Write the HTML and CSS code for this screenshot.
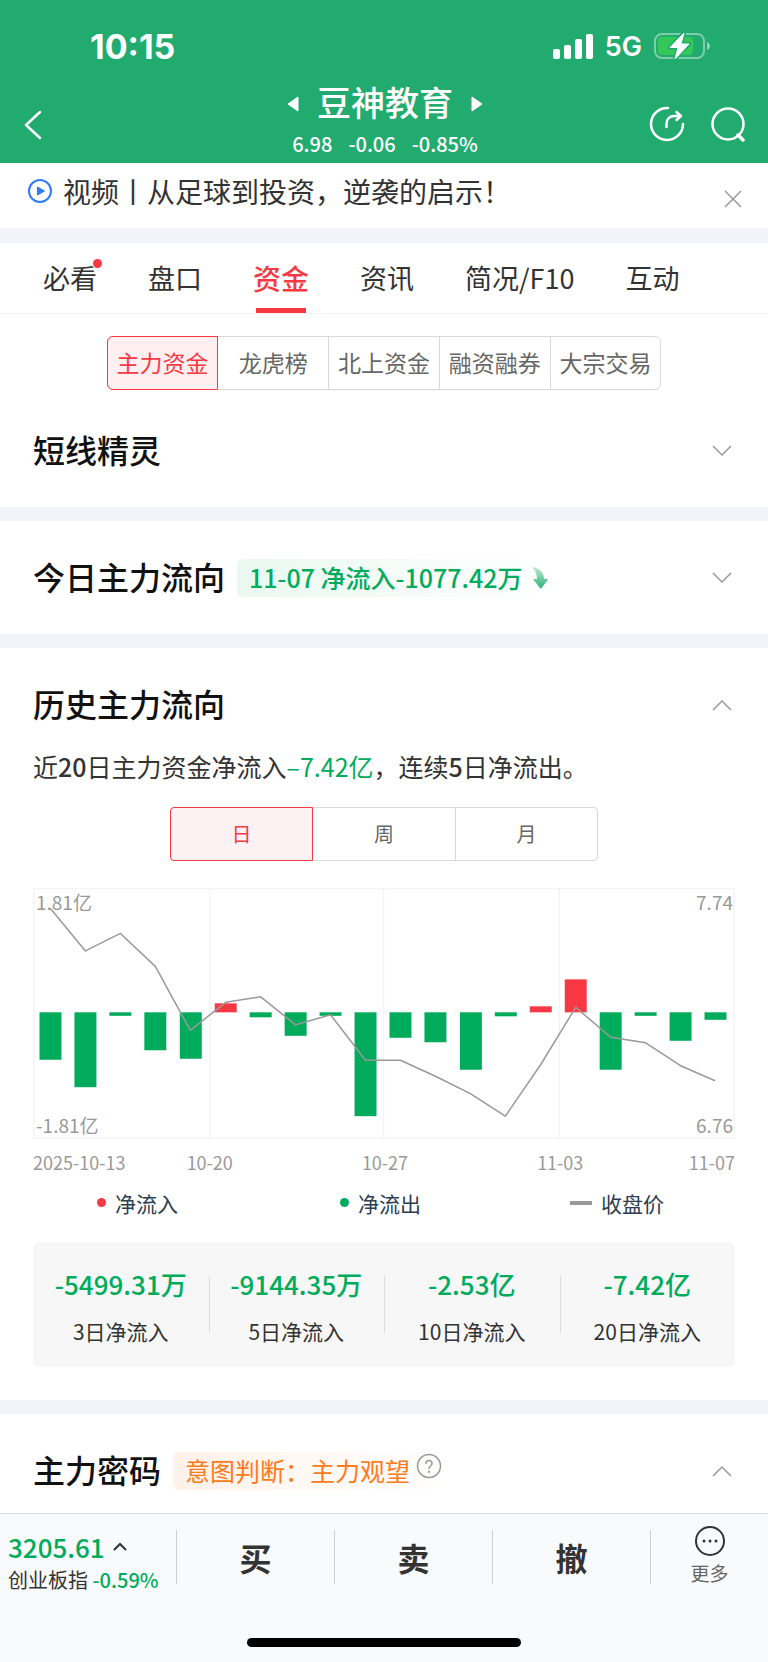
FILE: index.html
```html
<!DOCTYPE html>
<html lang="zh-CN">
    <head>
        <meta charset="utf-8">
        <meta name="viewport" content="width=device-width, initial-scale=1">
        <title>豆神教育</title>
        <link rel="stylesheet" href="styles.css">
    </head>
    <body>
        <header class="top">
            <div class="status">
                <span class="clock">10:15</span>
                <div class="status-right">
                    <svg width="40" height="26" viewBox="0 0 40 26" fill="#fff">
                        <rect x="0" y="16" width="7" height="10" rx="2" />
                        <rect x="11" y="12" width="7" height="14" rx="2" />
                        <rect x="22" y="6" width="7" height="20" rx="2" />
                        <rect x="33" y="1" width="7" height="25" rx="2" />
                    </svg>
                    <span class="net">5G</span>
                    <svg width="56" height="28" viewBox="0 0 56 28">
                        <rect x="1" y="2" width="49" height="24" rx="7" fill="none" stroke="#fff" stroke-opacity=".42" stroke-width="2" />
                        <path d="M53 10c4 1.500 4 6.500 0 8z" fill="#fff" fill-opacity=".5" />
                        <rect x="4" y="5" width="35" height="18" rx="4" fill="#34c759" />
                        <path d="M30 1L16 15.500h8L21 27l14-15h-8z" fill="#fff" stroke="#22ab6f" stroke-width="4" stroke-linejoin="round" />
                        <path d="M30 1L16 15.500h8L21 27l14-15h-8z" fill="#fff" stroke="#fff" stroke-linejoin="round" />
                    </svg>
                </div>
            </div>
            <div class="titlebar">
                <button class="icon-btn back" aria-label="返回">
                    <svg width="18" height="30" viewBox="0 0 18 30"><path d="M16 2L2 15l14 13" fill="none" stroke="#fff" stroke-width="2.500" stroke-linecap="round" stroke-linejoin="round" /></svg>
                </button>
                <div class="stock">
                    <div class="stock-name">
                        <button class="icon-btn" aria-label="上一只"><svg width="12" height="16" viewBox="0 0 12 16"><path d="M11 1v14L1 8z" fill="#fff" stroke="#fff" stroke-linejoin="round" /></svg></button>
                        <h1>豆神教育</h1>
                        <button class="icon-btn" aria-label="下一只"><svg width="12" height="16" viewBox="0 0 12 16"><path d="M1 1v14l10-7z" fill="#fff" stroke="#fff" stroke-linejoin="round" /></svg></button>
                    </div>
                    <div class="quote"><span>6.98</span><span>-0.06</span><span>-0.85%</span></div>
                </div>
                <div class="actions">
                    <button class="icon-btn" aria-label="分享">
                        <svg width="36" height="36" viewBox="0 0 36 36" fill="none" stroke="#fff" stroke-width="2.500" stroke-linecap="round" stroke-linejoin="round">
                            <path d="M19 2a16 16 0 1 0 15 16" />
                            <path d="M17.500 21v-3c0-5 3-8 8-8h6M27.500 6l4.500 4-4.500 4" />
                        </svg>
                    </button>
                    <button class="icon-btn" aria-label="搜索">
                        <svg width="36" height="36" viewBox="0 0 36 36" fill="none" stroke="#fff" stroke-width="2.500" stroke-linecap="round">
                            <circle cx="18" cy="18" r="15.500" />
                            <path d="M28 29l5 5" stroke-width="3.500" />
                        </svg>
                    </button>
                </div>
            </div>
        </header>

        <div class="notice">
            <svg width="26" height="26" viewBox="0 0 26 26"><circle cx="13" cy="13" r="11" fill="none" stroke="#2f7bf6" stroke-width="2" /><path d="M10.500 9v8l7-4z" fill="#2f7bf6" stroke="#2f7bf6" stroke-linejoin="round" /></svg>
            <a href="#">视频丨从足球到投资，逆袭的启示！</a>
            <button class="icon-btn close" aria-label="关闭"><svg width="18" height="18" viewBox="0 0 18 18"><path d="M1 1l16 16M17 1L1 17" stroke="#999" stroke-width="1.500" /></svg></button>
        </div>

        <nav class="tabs">
            <a href="#" class="dot">必看</a>
            <a href="#">盘口</a>
            <a href="#" class="active">资金</a>
            <a href="#">资讯</a>
            <a href="#">简况/F10</a>
            <a href="#">互动</a>
        </nav>

        <main>
            <section class="first">
                <div class="segment wide">
                    <button class="on">主力资金</button>
                    <button>龙虎榜</button>
                    <button>北上资金</button>
                    <button>融资融券</button>
                    <button>大宗交易</button>
                </div>
                <div class="section-head">
                    <h2>短线精灵</h2>
                    <button class="icon-btn toggle" aria-label="展开"><svg width="20" height="12" viewBox="0 0 20 12"><path d="M1 1l9 9 9-9" /></svg></button>
                </div>
            </section>

            <section>
                <div class="section-head">
                    <h2>今日主力流向</h2>
                    <div class="tag green">
                        <span>11-07 净流入-1077.42万</span>
                        <svg width="16" height="22" viewBox="0 0 16 22">
                            <defs><linearGradient id="fall" x1="0" y1="0" x2="0" y2="1"><stop offset="0" stop-color="#bfe8d3" /><stop offset="1" stop-color="#2fb477" /></linearGradient></defs>
                            <path d="M0 0c8 1 12 6 12 12h3c1 0 1 1 .5 1.500L9.500 21c-.5.700-1 .7-1.500 0l-6-7.500c-.5-.5-.5-1.500.5-1.500H5C5 7 3 3 0 0z" fill="url(#fall)" />
                        </svg>
                    </div>
                    <button class="icon-btn toggle" aria-label="展开"><svg width="20" height="12" viewBox="0 0 20 12"><path d="M1 1l9 9 9-9" /></svg></button>
                </div>
            </section>

            <section class="history">
                <div class="section-head">
                    <h2>历史主力流向</h2>
                    <button class="icon-btn toggle" aria-label="收起"><svg width="20" height="12" viewBox="0 0 20 12"><path d="M1 11l9-9 9 9" /></svg></button>
                </div>
                <p class="summary">近<b>20</b>日主力资金净流入<span class="down">–7.42亿</span>，连续<b>5</b>日净流出。</p>
                <div class="segment period">
                    <button class="on">日</button>
                    <button>周</button>
                    <button>月</button>
                </div>
                <div class="chart">
                    <svg viewBox="0 0 703 251">
                        <g fill="none" stroke="#f4f4f4" stroke-width="1.500">
                            <rect x="0.750" y="0.750" width="701.500" height="249.500" />
                            <path d="M177 0v251M351 0v251M527 0v251" />
                            <path d="M0 124.500h703" stroke-dasharray="4 3" stroke-width="1" />
                        </g>
                        <g fill="#00ac5c">
                            <rect x="6.500" y="124.500" width="22" height="47.500" />
                            <rect x="41.500" y="124.500" width="22" height="75" />
                            <rect x="76.500" y="124.500" width="22" height="3.500" />
                            <rect x="111.500" y="124.500" width="22" height="38" />
                            <rect x="147" y="124.500" width="22" height="46.500" />
                            <rect x="217" y="124.500" width="22" height="5" />
                            <rect x="252" y="124.500" width="22" height="23.500" />
                            <rect x="287" y="124.500" width="22" height="3.500" />
                            <rect x="322" y="124.500" width="22" height="104" />
                            <rect x="357" y="124.500" width="22" height="25.500" />
                            <rect x="392" y="124.500" width="22" height="30" />
                            <rect x="427.500" y="124.500" width="22" height="57.500" />
                            <rect x="462.500" y="124.500" width="22" height="4" />
                            <rect x="567.500" y="124.500" width="22" height="57.500" />
                            <rect x="602.500" y="124.500" width="22" height="3.500" />
                            <rect x="637.500" y="124.500" width="22" height="28.500" />
                            <rect x="672.500" y="124.500" width="22" height="7.500" />
                        </g>
                        <g fill="#f83843">
                            <rect x="182" y="115.500" width="22" height="9" />
                            <rect x="497.500" y="118.500" width="22" height="6" />
                            <rect x="532.500" y="91.500" width="22" height="33" />
                        </g>
                        <polyline points="17.500,20.500 52.500,63 87.500,45.500 122.500,78.500 157.500,142.500 193,114.500 228,109 263,137 298,127 333,172.500 368,172.500 403,188.500 438,206 473,228.500 508,177.500 543.500,119.500 578.500,149.500 613.500,155 648.500,178 683,193" fill="none" stroke="#999" stroke-width="1.500" stroke-linejoin="round" />
                    </svg>
                    <span class="axis tl">1.81亿</span>
                    <span class="axis bl">-1.81亿</span>
                    <span class="axis tr">7.74</span>
                    <span class="axis br">6.76</span>
                </div>
                <div class="dates">
                    <span>2025-10-13</span><span>10-20</span><span>10-27</span><span>11-03</span><span>11-07</span>
                </div>
                <div class="legend">
                    <div><i><em class="in"></em></i>净流入</div>
                    <div><i><em class="out"></em></i>净流出</div>
                    <div><i><em class="line"></em></i>收盘价</div>
                </div>
                <div class="stats">
                    <div><strong>-5499.31万</strong><span>3日净流入</span></div>
                    <div><strong>-9144.35万</strong><span>5日净流入</span></div>
                    <div><strong>-2.53亿</strong><span>10日净流入</span></div>
                    <div><strong>-7.42亿</strong><span>20日净流入</span></div>
                </div>
            </section>

            <section class="cipher">
                <div class="section-head">
                    <h2>主力密码</h2>
                    <div class="tag orange">
                        <span>意图判断：主力观望</span>
                        <button class="icon-btn help" aria-label="说明">
                            <svg width="26" height="26" viewBox="0 0 26 26" fill="none" stroke="#999" stroke-width="1.500" stroke-linecap="round">
                                <circle cx="13" cy="13" r="11.500" />
                                <path d="M10 10.500c0-4 6-4 6 0 0 2.500-3 2.500-3 5" /><path d="M13 18.500v.5" stroke-width="2" />
                            </svg>
                        </button>
                    </div>
                    <button class="icon-btn toggle" aria-label="收起"><svg width="20" height="12" viewBox="0 0 20 12"><path d="M1 11l9-9 9 9" /></svg></button>
                </div>
            </section>
        </main>

        <footer class="bottom">
            <div class="trade">
                <a href="#" class="index">
                    <span class="index-value">3205.61 <svg width="14" height="9" viewBox="0 0 14 9"><path d="M1 8l6-6 6 6" fill="none" stroke="#333" stroke-width="2" /></svg></span>
                    <span class="index-name">创业板指 <span class="down">-0.59%</span></span>
                </a>
                <button>买</button>
                <button>卖</button>
                <button>撤</button>
                <button class="more">
                    <svg width="32" height="32" viewBox="0 0 32 32"><circle cx="16" cy="16" r="14" fill="none" stroke="#333" stroke-width="2" /><g fill="#333"><circle cx="10" cy="16" r="1.500" /><circle cx="16" cy="16" r="1.500" /><circle cx="22" cy="16" r="1.500" /></g></svg>
                    <span>更多</span>
                </button>
            </div>
            <div class="home"></div>
        </footer>
    </body>
</html>
```
FILE: styles.css
```css
* {
    box-sizing: border-box;
}
body {
    margin: 0;
    min-height: 100vh;
    display: flex;
    flex-direction: column;
    background: #fff;
    color: #333;
    font-family: "Noto Sans CJK SC", sans-serif;
}
h1, h2, p {
    margin: 0;
}
a {
    color: inherit;
    text-decoration: none;
}
button {
    font: inherit;
    color: inherit;
    background: none;
    border: 0;
    padding: 0;
    cursor: pointer;
}
svg {
    display: block;
    flex: none;
}
.icon-btn {
    display: block;
    flex: none;
}
.down {
    color: #00ac5c;
}

/* header */
.top {
    background: #22ab6f;
    color: #fff;
    height: 163px;
}
.status {
    display: flex;
    justify-content: space-between;
    align-items: center;
    height: 80px;
    padding: 12px 58px 0 90px;
    font-family: Inter, sans-serif;
}
.clock {
    font-size: 34px;
    font-weight: 700;
}
.status-right {
    display: flex;
    align-items: center;
    gap: 12px;
}
.net {
    font-size: 27px;
    font-weight: 600;
}
.titlebar {
    display: grid;
    grid-template-columns: 1fr auto 1fr;
    height: 83px;
    padding: 0 22px 0 24px;
}
.back {
    align-self: center;
    justify-self: start;
    padding-top: 6px;
}
.stock-name {
    display: flex;
    align-items: center;
    justify-content: center;
    gap: 18px;
}
.stock-name h1 {
    font-size: 34px;
    line-height: 44px;
    padding-bottom: 4px;
    font-weight: 500;
}
.quote {
    display: flex;
    justify-content: center;
    gap: 16px;
    font-size: 20px;
    line-height: 32px;
    font-weight: 500;
}
.actions {
    align-self: center;
    justify-self: end;
    display: flex;
    gap: 25px;
    padding-top: 5px;
}

/* notice */
.notice {
    display: flex;
    align-items: center;
    height: 80px;
    padding: 0 27px 10px;
    border-bottom: 15px solid #f3f4f9;
    font-size: 28px;
    line-height: 40px;
}
.notice a {
    flex: 1;
    margin-left: 10px;
}
.close {
    padding-top: 16px;
    margin-right: -1px;
}

/* tabs */
.tabs {
    display: flex;
    gap: 51px;
    height: 71px;
    padding: 0 43px;
    border-bottom: 1px solid #f2f2f2;
    font-size: 27px;
    line-height: 70px;
    white-space: nowrap;
}
.tabs a {
    position: relative;
}
.tabs .active {
    color: #f83843;
    font-size: 28px;
    font-weight: 500;
}
.tabs .active::after {
    content: "";
    position: absolute;
    left: 3px;
    right: 3px;
    bottom: 0;
    height: 5px;
    background: #f83843;
}
.tabs .dot::after {
    content: "";
    position: absolute;
    top: 16px;
    right: -5px;
    width: 9px;
    height: 9px;
    border-radius: 50%;
    background: #f83843;
}

/* sections */
section {
    padding: 0 33px;
    border-bottom: 14px solid #f3f4f9;
}
.section-head {
    display: flex;
    align-items: center;
    height: 113px;
}
.section-head h2 {
    font-size: 32px;
    line-height: 46px;
    padding-bottom: 4px;
    font-weight: 500;
    color: #111;
}
.toggle {
    margin-left: auto;
    margin-right: 3px;
}
.toggle path {
    fill: none;
    stroke: #999;
    stroke-width: 1.5;
}
.segment {
    display: flex;
    margin: 0 auto;
    height: 54px;
    border: 1px solid #d8d8d8;
    border-radius: 6px;
    color: #666;
}
.segment button {
    flex: 1;
    margin: -1px 0;
    padding-bottom: 2px;
    border-right: 1px solid #d8d8d8;
}
.segment button:last-child {
    border-right: 0;
}
.segment .on {
    margin-left: -1px;
    color: #f83843;
    background: #ffeff0;
    border: 1px solid #f83843;
    border-radius: 6px 0 0 6px;
}
.wide {
    width: 79%;
    font-size: 23px;
}
.period {
    width: 61%;
    border-radius: 4px;
    font-size: 20px;
}
.period .on {
    border-radius: 4px 0 0 4px;
    background: #fdf2f3;
}
.first {
    padding-top: 22px;
}
.first .section-head {
    height: 117px;
    padding-top: 4px;
}
.tag {
    display: flex;
    align-items: center;
    height: 38px;
    margin-left: 12px;
    padding: 0 12px;
    border-radius: 6px;
    font-size: 25px;
    white-space: nowrap;
}
.tag span {
    padding-bottom: 2px;
}
.green {
    color: #00ac5c;
    font-weight: 500;
    gap: 10px;
    background: linear-gradient(90deg, #eaf8f1, #fff);
}
.orange {
    color: #ff7a20;
    gap: 6px;
    background: linear-gradient(90deg, #fff2ea, #fff);
}
.help {
    margin-bottom: 10px;
}

/* history chart */
.history {
    padding-bottom: 33px;
}
.history .section-head {
    height: 101px;
    padding-top: 12px;
}
.summary {
    font-size: 25px;
    line-height: 34px;
    margin-bottom: 24px;
}
.summary b {
    font-weight: 500;
}
.chart {
    position: relative;
    margin-top: 27px;
}
.chart svg {
    width: 100%;
}
.axis {
    position: absolute;
    color: #999;
    font-size: 19px;
    line-height: 28px;
}
.tl { left: 3px; top: 0; }
.bl { left: 3px; bottom: 0; }
.tr { right: 2px; top: 0; }
.br { right: 2px; bottom: 0; }
.dates {
    display: grid;
    grid-template-columns: 110fr 134fr 217fr 134fr 108fr;
    margin-top: 9px;
    color: #999;
    font-size: 18px;
    line-height: 28px;
    text-align: center;
}
.dates span:first-child {
    text-align: left;
}
.dates span:last-child {
    text-align: right;
}
.legend {
    display: flex;
    justify-content: space-between;
    margin-top: 11px;
    padding: 0 71px 0 51px;
    color: #2c3e50;
    font-size: 21px;
    line-height: 32px;
}
.legend div {
    display: flex;
    align-items: center;
    gap: 9px;
}
.legend i {
    width: 22px;
}
.legend em {
    display: block;
    margin-left: auto;
    width: 9px;
    height: 9px;
    border-radius: 50%;
}
.legend .in { background: #f83843; }
.legend .out { background: #00ac5c; }
.legend .line {
    width: 22px;
    height: 4px;
    border-radius: 0;
    background: #999;
}
.stats {
    display: grid;
    grid-template-columns: repeat(4, 1fr);
    margin-top: 23px;
    padding: 24px 0 20px;
    border-radius: 6px;
    background: #f7f7f7;
    text-align: center;
}
.stats div {
    position: relative;
}
.stats div + div::before {
    content: "";
    position: absolute;
    left: 0;
    top: 10px;
    bottom: 14px;
    width: 1px;
    background: #ddd;
}
.stats strong {
    display: block;
    color: #00ac5c;
    font-size: 26px;
    line-height: 36px;
    font-weight: 500;
}
.stats span {
    display: block;
    margin-top: 13px;
    font-size: 21px;
    line-height: 32px;
}
.cipher {
    border-bottom: 0;
}
.cipher .section-head {
    height: 99px;
    padding-top: 15px;
}

/* bottom bar */
.bottom {
    flex: 1;
    display: flex;
    flex-direction: column;
    justify-content: space-between;
    background: #f9fafc;
    border-top: 1px solid #dcdee2;
}
.trade {
    display: grid;
    grid-template-columns: 176fr 158fr 158fr 158fr 118fr;
    height: 86px;
    padding-top: 16px;
}
.trade button {
    height: 54px;
    border-left: 1px solid #d0d0d4;
    font-size: 32px;
    line-height: 52px;
    font-weight: 700;
}
.trade .more {
    display: flex;
    flex-direction: column;
    align-items: center;
    justify-content: center;
    font-size: 19px;
    line-height: 32px;
    font-weight: 400;
    color: #666;
}
.index {
    padding-left: 8px;
    white-space: nowrap;
}
.index-value {
    display: flex;
    align-items: center;
    gap: 8px;
    color: #00ac5c;
    font-size: 26px;
    line-height: 34px;
    font-weight: 500;
}
.index-name {
    display: block;
    font-size: 20px;
    line-height: 32px;
}
.index-name .down {
    font-weight: 500;
}
.home {
    width: 274px;
    height: 9px;
    margin: 0 auto 15px;
    border-radius: 5px;
    background: #000;
}
```
